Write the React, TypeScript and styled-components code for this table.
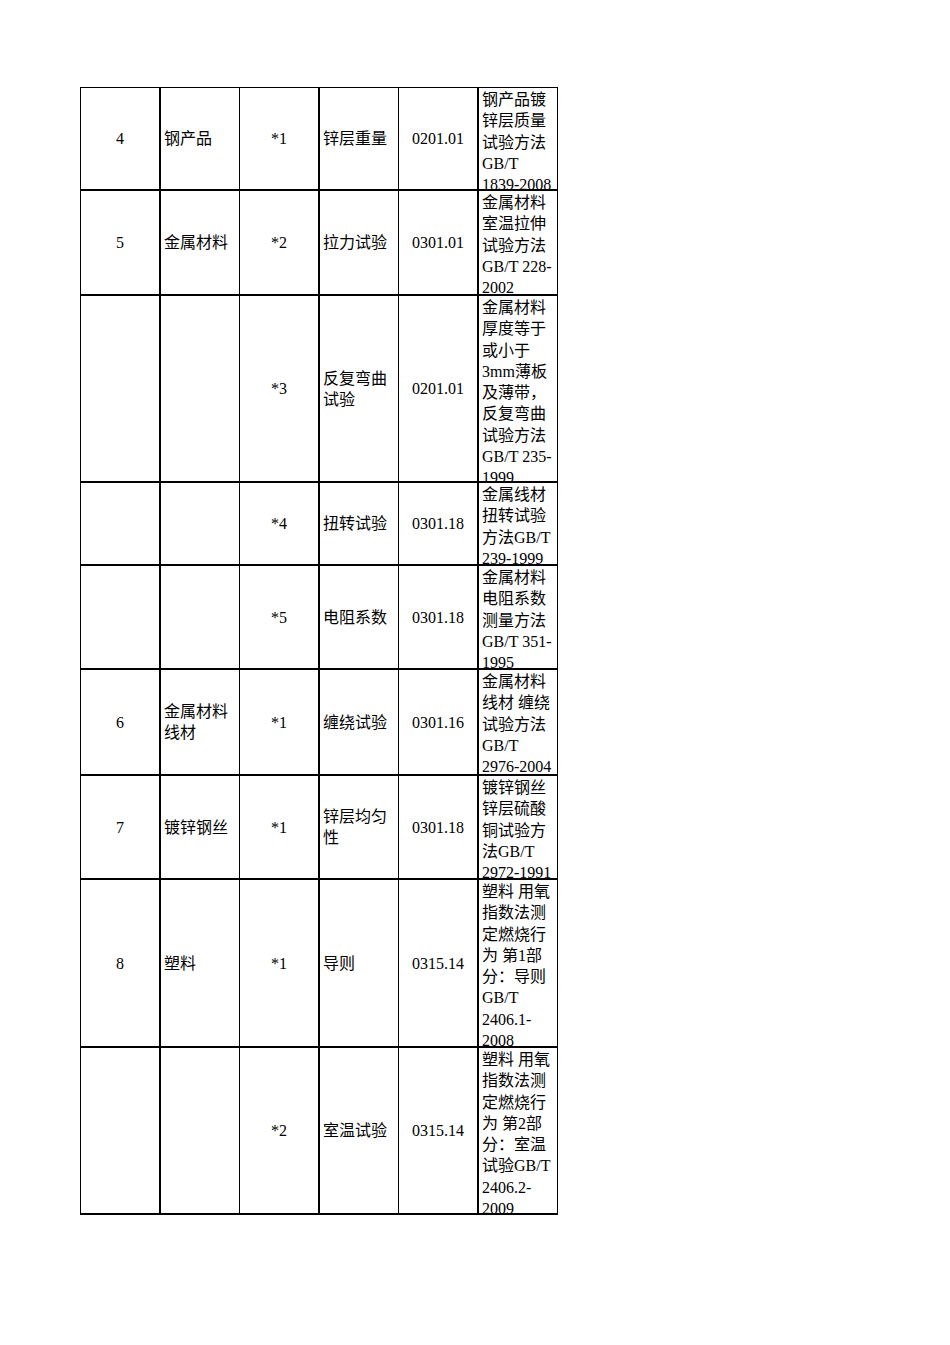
import React from 'react'
import styled, { createGlobalStyle } from 'styled-components'

const GlobalStyle = createGlobalStyle`
    body {
        margin: 0;
        background: #ffffff;
        font-family: "Liberation Serif", "Noto Sans CJK SC", serif;
        color: #000000;
    }
`

const Page = styled.div`
    width: 950px;
    height: 1345px;
    padding: 87px 0 0 80px;
    box-sizing: border-box;
`

const Table = styled.div`
    display: flex;
    flex-direction: column;
    width: 478px;
    border-top: 1px solid #000;
    border-left: 1px solid #000;
    box-sizing: border-box;
`

const Row = styled.div<{ $h: number }>`
    display: grid;
    grid-template-columns: 80px 79px 80px 79px 80px 79px;
    height: ${(p) => p.$h}px;
    border-bottom: 2px solid #000;
    box-sizing: border-box;
`

const Cell = styled.div<{ $align?: 'left' | 'center'; $thick?: boolean }>`
    display: flex;
    align-items: center;
    justify-content: ${(p) => (p.$align === 'left' ? 'flex-start' : 'center')};
    text-align: ${(p) => p.$align || 'center'};
    padding: 0 ${(p) => (p.$align === 'left' ? '3px' : '0')};
    border-right: ${(p) => (p.$thick ? 2 : 1)}px solid #000;
    box-sizing: border-box;
    font-size: 16px;
    line-height: 21px;
    overflow: hidden;
    min-width: 0;
`

// last column: top aligned, lines overflow and get cut by the row border
const StdCell = styled.div`
    border-right: 1px solid #000;
    box-sizing: border-box;
    padding: 1px 2px 0 3px;
    font-size: 16px;
    line-height: 21.3px;
    overflow: hidden;
    white-space: pre;
`

type Item = {
    h: number
    no?: string
    name?: string
    idx: string
    item: string
    code: string
    std: string[]
}

const rows: Item[] = [
    { h: 103, no: '4', name: '钢产品', idx: '*1', item: '锌层重量', code: '0201.01', std: ['钢产品镀', '锌层质量', '试验方法', 'GB/T', '1839-2008'] },
    { h: 105, no: '5', name: '金属材料', idx: '*2', item: '拉力试验', code: '0301.01', std: ['金属材料', '室温拉伸', '试验方法', 'GB/T 228-', '2002'] },
    { h: 187, idx: '*3', item: '反复弯曲试验', code: '0201.01', std: ['金属材料', '厚度等于', '或小于', '3mm薄板', '及薄带，', '反复弯曲', '试验方法', 'GB/T 235-', '1999'] },
    { h: 83, idx: '*4', item: '扭转试验', code: '0301.18', std: ['金属线材', '扭转试验', '方法GB/T', '239-1999'] },
    { h: 104, idx: '*5', item: '电阻系数', code: '0301.18', std: ['金属材料', '电阻系数', '测量方法', 'GB/T 351-', '1995'] },
    { h: 106, no: '6', name: '金属材料线材', idx: '*1', item: '缠绕试验', code: '0301.16', std: ['金属材料', '线材 缠绕', '试验方法', 'GB/T', '2976-2004'] },
    { h: 104, no: '7', name: '镀锌钢丝', idx: '*1', item: '锌层均匀性', code: '0301.18', std: ['镀锌钢丝', '锌层硫酸', '铜试验方', '法GB/T', '2972-1991'] },
    { h: 168, no: '8', name: '塑料', idx: '*1', item: '导则', code: '0315.14', std: ['塑料 用氧', '指数法测', '定燃烧行', '为 第1部', '分：导则', 'GB/T', '2406.1-', '2008'] },
    { h: 167, idx: '*2', item: '室温试验', code: '0315.14', std: ['塑料 用氧', '指数法测', '定燃烧行', '为 第2部', '分：室温', '试验GB/T', '2406.2-', '2009'] },
]

export default function App() {
    return (
        <Page>
            <GlobalStyle />
            <Table>
                {rows.map((r, i) => (
                    <Row key={i} $h={r.h}>
                        <Cell $thick>{r.no}</Cell>
                        <Cell $align='left'>{r.name}</Cell>
                        <Cell $thick>{r.idx}</Cell>
                        <Cell $align='left'>{r.item}</Cell>
                        <Cell $thick>{r.code}</Cell>
                        <StdCell>{r.std.join('\n')}</StdCell>
                    </Row>
                ))}
            </Table>
        </Page>
    )
}
